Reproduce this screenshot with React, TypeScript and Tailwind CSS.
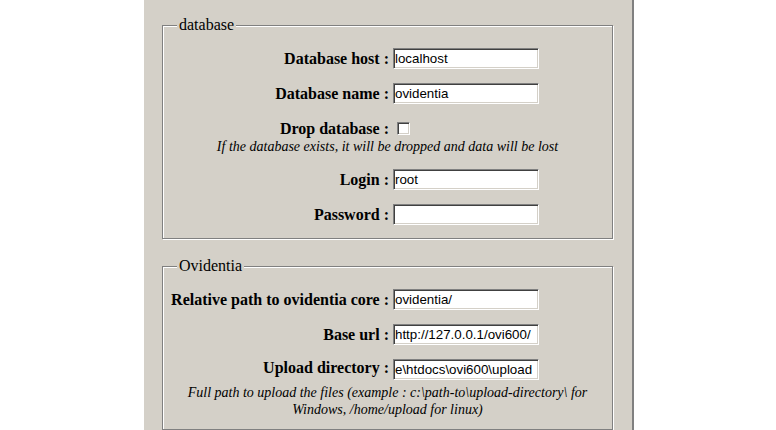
import React from 'react';

function TextBox({ value }: { value: string }) {
  return (
    <input
      type="text"
      readOnly
      value={value}
      className="box-border h-[21px] w-[146px] border border-t-[#808080] border-l-[#808080] border-b-white border-r-white bg-white px-[1px] font-['Liberation_Sans',Arial,sans-serif] text-[13.33px] text-black shadow-[inset_1px_1px_0_#404040,inset_-1px_-1px_0_#d4d0c8] outline-none"
    />
  );
}

function CheckBox() {
  return (
    <span className="mb-[3px] ml-[4px] block h-[13px] w-[13px] border border-t-[#808080] border-l-[#808080] border-b-white border-r-white bg-white shadow-[inset_1px_1px_0_#404040,inset_-1px_-1px_0_#d4d0c8]" />
  );
}

function Row({
  label,
  children,
  className,
}: {
  label: string;
  children: React.ReactNode;
  className: string;
}) {
  return (
    <div className={className}>
      <div className="flex w-[212px] shrink-0 justify-end">
        <label className="whitespace-nowrap text-[16px] font-bold leading-[18px]">{label}</label>
      </div>
      <div className="ml-[4px] flex">{children}</div>
    </div>
  );
}

function Group({
  title,
  children,
  className,
}: {
  title: string;
  children: React.ReactNode;
  className: string;
}) {
  return (
    <fieldset className={className}>
      <legend className="bg-[#d4d0c8] px-[2px] text-[16px] leading-[18px]">{title}</legend>
      {children}
    </fieldset>
  );
}

export default function App() {
  return (
    <div className="min-h-screen bg-white font-['Liberation_Serif','Times_New_Roman',serif] text-black">
      <div className="ml-[144px] w-[490px] border-r-2 border-[#808080] bg-[#d4d0c8] px-[18px] pb-[18px] pt-[16px]">
        <Group
          title="database"
          className="mr-[1px] border border-[#808080] px-[14px] pb-[6px] pt-[7px] shadow-[inset_1px_1px_0_#fff,1px_1px_0_#fff]"
        >
          <Row label="Database host :" className="flex h-[35px] items-center">
            <TextBox value="localhost" />
          </Row>
          <Row label="Database name :" className="flex h-[35px] items-center">
            <TextBox value="ovidentia" />
          </Row>
          <Row label="Drop database :" className="flex h-[27px] items-end">
            <CheckBox />
          </Row>
          <p className="text-center text-[14px] italic leading-[17px]">
            If the database exists, it will be dropped and data will be lost
          </p>
          <Row label="Login :" className="mt-[7px] flex h-[35px] items-center">
            <TextBox value="root" />
          </Row>
          <Row label="Password :" className="flex h-[35px] items-center">
            <TextBox value="" />
          </Row>
        </Group>

        <Group
          title="Ovidentia"
          className="mr-[1px] mt-[18px] border border-[#808080] px-[14px] pb-[11px] pt-[7px] shadow-[inset_1px_1px_0_#fff,1px_1px_0_#fff]"
        >
          <Row label="Relative path to ovidentia core :" className="flex h-[35px] items-center">
            <TextBox value="ovidentia/" />
          </Row>
          <Row label="Base url :" className="flex h-[35px] items-center">
            <TextBox value="http://127.0.0.1/ovi600/" />
          </Row>
          <Row label="Upload directory :" className="flex h-[32px] items-start pt-[7px]">
            <TextBox value={'e\\htdocs\\ovi600\\upload'} />
          </Row>
          <p className="text-center text-[14px] italic leading-[17px]">
            {'Full path to upload the files (example : c:\\path-to\\upload-directory\\ for'}
            <br />
            Windows, /home/upload for linux)
          </p>
        </Group>
      </div>
    </div>
  );
}
